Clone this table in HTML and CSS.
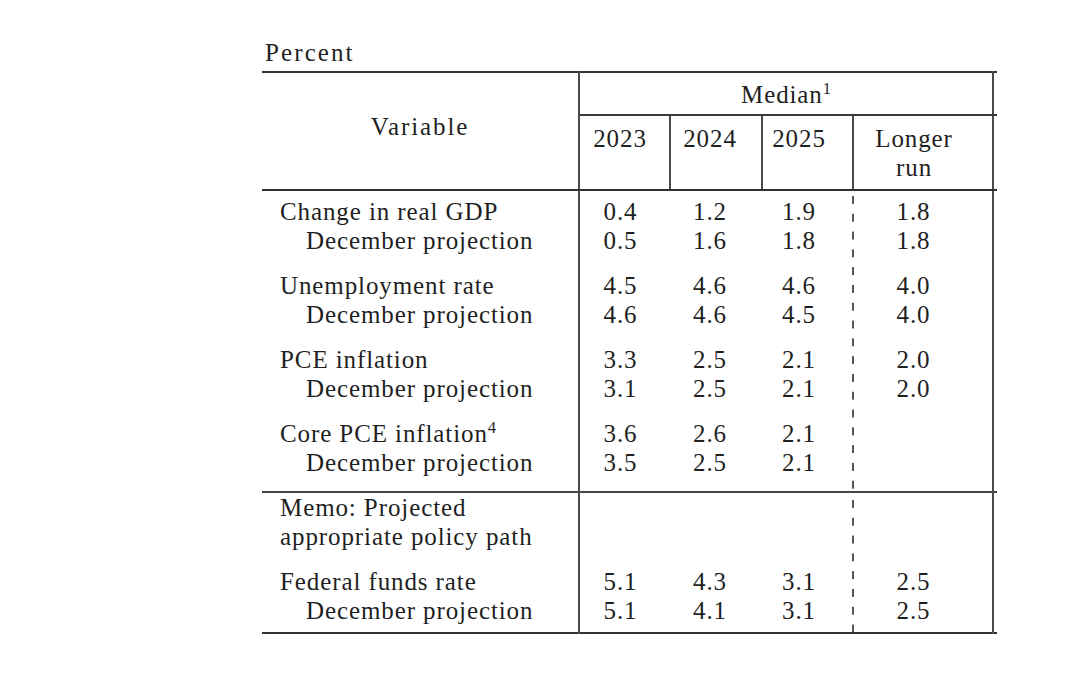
FILE: index.html
```html
<!DOCTYPE html>
<html lang="en">
<head>
<meta charset="utf-8">
<title>Economic projections</title>
<link rel="stylesheet" href="styles.css">
</head>
<body>
<main class="page">
  <table class="proj">
    <caption class="unit">Percent</caption>
    <colgroup>
      <col class="w-var"><col class="w-y1"><col class="w-y2"><col class="w-y3"><col class="w-lr"><col class="w-edge">
    </colgroup>
    <thead>
      <tr class="hrow-median">
        <th class="var" rowspan="2">Variable</th>
        <th class="median" colspan="4">Median<sup class="fn">1</sup></th>
        <td class="edge"></td>
      </tr>
      <tr class="hrow-years">
        <th class="yr c1">2023</th>
        <th class="yr c2">2024</th>
        <th class="yr c3">2025</th>
        <th class="yr c4">Longer<br>run</th>
        <td class="edge"></td>
      </tr>
    </thead>
    <tbody class="sec sec-main">
      <tr class="top">
        <th class="lbl">Change in real GDP</th><td class="c1">0.4</td><td class="c2">1.2</td><td class="c3">1.9</td><td class="c4">1.8</td><td class="edge"></td>
      </tr>
      <tr>
        <th class="lbl sub">December projection</th><td class="c1">0.5</td><td class="c2">1.6</td><td class="c3">1.8</td><td class="c4">1.8</td><td class="edge"></td>
      </tr>
      <tr class="gstart">
        <th class="lbl">Unemployment rate</th><td class="c1">4.5</td><td class="c2">4.6</td><td class="c3">4.6</td><td class="c4">4.0</td><td class="edge"></td>
      </tr>
      <tr>
        <th class="lbl sub">December projection</th><td class="c1">4.6</td><td class="c2">4.6</td><td class="c3">4.5</td><td class="c4">4.0</td><td class="edge"></td>
      </tr>
      <tr class="gstart">
        <th class="lbl">PCE inflation</th><td class="c1">3.3</td><td class="c2">2.5</td><td class="c3">2.1</td><td class="c4">2.0</td><td class="edge"></td>
      </tr>
      <tr>
        <th class="lbl sub">December projection</th><td class="c1">3.1</td><td class="c2">2.5</td><td class="c3">2.1</td><td class="c4">2.0</td><td class="edge"></td>
      </tr>
      <tr class="gstart">
        <th class="lbl">Core PCE inflation<sup class="fn">4</sup></th><td class="c1">3.6</td><td class="c2">2.6</td><td class="c3">2.1</td><td class="c4"></td><td class="edge"></td>
      </tr>
      <tr class="last">
        <th class="lbl sub">December projection</th><td class="c1">3.5</td><td class="c2">2.5</td><td class="c3">2.1</td><td class="c4"></td><td class="edge"></td>
      </tr>
    </tbody>
    <tbody class="sec sec-memo">
      <tr class="memo">
        <th class="lbl">Memo: Projected<br>appropriate policy path</th><td class="c1"></td><td class="c2"></td><td class="c3"></td><td class="c4"></td><td class="edge"></td>
      </tr>
      <tr class="gstart">
        <th class="lbl">Federal funds rate</th><td class="c1">5.1</td><td class="c2">4.3</td><td class="c3">3.1</td><td class="c4">2.5</td><td class="edge"></td>
      </tr>
      <tr class="last">
        <th class="lbl sub">December projection</th><td class="c1">5.1</td><td class="c2">4.1</td><td class="c3">3.1</td><td class="c4">2.5</td><td class="edge"></td>
      </tr>
    </tbody>
  </table>
</main>
</body>
</html>
```

FILE: styles.css
```css
* { box-sizing: border-box; }

html, body {
  margin: 0;
  background: #ffffff;
}

body {
  font-family: "Liberation Serif", "Times New Roman", serif;
  color: #1f1f1f;
}

.page {
  padding: 38px 0 0 262px;
}

.proj {
  border-collapse: collapse;
  table-layout: fixed;
  width: 735px;
  font-size: 25px;
  line-height: 29px;
  letter-spacing: 0.9px;
  border-top: 2px solid #333;
  border-bottom: 2px solid #333;
}

.w-var { width: 317px; }
.w-y1 { width: 91px; }
.w-y2 { width: 92px; }
.w-y3 { width: 91px; }
.w-lr { width: 140px; }
.w-edge { width: 4px; }

.unit {
  caption-side: top;
  text-align: left;
  padding: 0 0 4px 3px;
  letter-spacing: 2.1px;
}

th, td {
  padding: 0;
  font-weight: normal;
  text-align: center;
  vertical-align: top;
}

.fn {
  font-size: 0.66em;
  line-height: 0;
  vertical-align: 0.55em;
  letter-spacing: 0;
}

/* header */
.var {
  padding-top: 39px;
  letter-spacing: 1.9px;
  border-right: 2px solid #4a4a4a;
  border-bottom: 2px solid #333;
}

.median {
  padding: 7px 0 5px;
  border-bottom: 2px solid #3a3a3a;
  border-right: 2px solid #4a4a4a;
}

.hrow-median .edge {
  border-bottom: 2px solid #3a3a3a;
}

.hrow-years > * {
  padding-top: 8px;
  padding-bottom: 7px;
  border-bottom: 2px solid #333;
}

.yr {
  border-right: 2px solid #4a4a4a;
}

/* columns */
.c1 { padding-right: 9px; }
.c2 { padding-right: 12px; }
.c3 { padding-right: 17px; }
.c4 {
  padding-right: 18px;
  border-right: 2px solid #4a4a4a;
}

/* body */
.lbl {
  text-align: left;
  padding-left: 18px;
  border-right: 2px solid #4a4a4a;
  white-space: nowrap;
}

.lbl.sub {
  padding-left: 44px;
}

.sec {
  background-image: linear-gradient(to bottom, #555 0, #555 8px, transparent 8px);
  background-size: 2px 17.8px;
  background-repeat: repeat-y;
  background-position: 590px 6px;
}

.sec-memo {
  border-top: 2px solid #444;
}

.sec-main .top > * { padding-top: 6px; }
.gstart > * { padding-top: 16px; }
.sec-main .last > * { padding-bottom: 14px; }
.sec-memo .memo > * { padding-top: 0; }
.sec-memo .last > * { padding-bottom: 7px; }
```
